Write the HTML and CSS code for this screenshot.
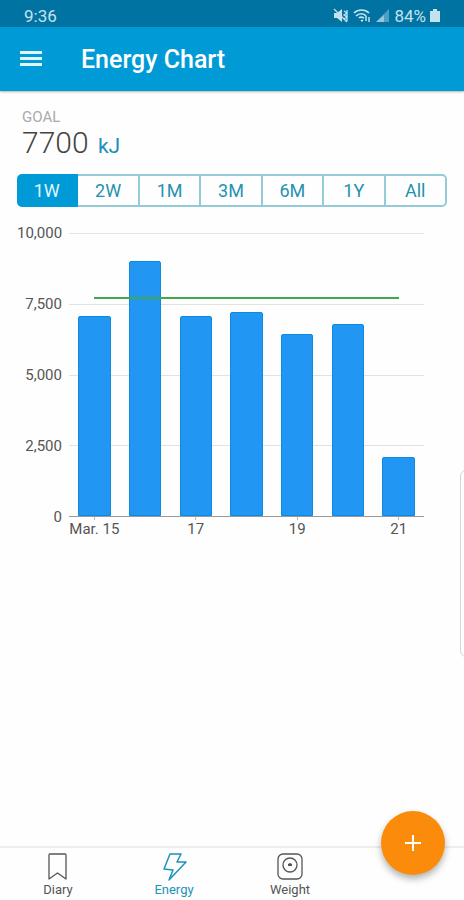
FILE: index.html
```html
<!DOCTYPE html>
<html lang="en">
<head>
    <meta charset="UTF-8">
    <meta name="viewport" content="width=device-width, initial-scale=1.0">
    <title>Energy Chart</title>
    <link rel="stylesheet" href="styles.css">
</head>
<body>
    <div class="status-bar">
        <span>9:36</span>
        <div class="status-icons">
            <svg width="16" height="16" viewBox="0 0 16 16" fill="currentColor">
                <path d="M1 5h3l5-4v13l-5-4H1z"/>
                <path d="M1 1l13 13M11 3l3 2-3 2 3 2-3 2M14 2v11" fill="none" stroke="currentColor" stroke-width="1.3"/>
            </svg>
            <svg width="19" height="16" viewBox="0 0 19 16" fill="none" stroke="currentColor" stroke-width="1.7">
                <path d="M1 5c4-4 11-4 15 0M3 8c3-3 8-3 10 0M6 10c1-1 3-1 5 0"/>
                <path d="M8 12l1 1 1-1M13 8v5M16 9v5" stroke-width="1.5"/>
            </svg>
            <svg width="14" height="16" viewBox="0 0 14 16" fill="currentColor">
                <path d="M0 14L13 1v13z" opacity=".4"/>
                <path d="M0 14l8-7v7z" opacity=".6"/>
            </svg>
            <span>84%</span>
            <svg width="10" height="16" viewBox="0 0 10 16" fill="currentColor">
                <path d="M3 1h4v2h3v11H0V3h3z"/>
            </svg>
        </div>
    </div>

    <header>
        <button class="menu-btn" aria-label="Menu">
            <svg width="22" height="16" viewBox="0 0 22 16" fill="currentColor">
                <path d="M0 0h22v3H0zM0 6h22v3H0zM0 12h22v3H0z"/>
            </svg>
        </button>
        <h1>Energy Chart</h1>
    </header>

    <main>
        <div class="goal">
            <div class="goal-label">GOAL</div>
            <div class="goal-value">7700 <span class="goal-unit">kJ</span></div>
        </div>

        <div class="range">
            <button class="active">1W</button>
            <button>2W</button>
            <button>1M</button>
            <button>3M</button>
            <button>6M</button>
            <button>1Y</button>
            <button>All</button>
        </div>

        <div class="chart">
            <div class="y-axis">
                <span>10,000</span>
                <span>7,500</span>
                <span>5,000</span>
                <span>2,500</span>
                <span>0</span>
            </div>
            <div class="plot">
                <div class="grid-lines"><i></i><i></i><i></i><i></i></div>
                <div class="bars">
                    <div class="bar" style="height: 70.8%"></div>
                    <div class="bar" style="height: 90.2%"></div>
                    <div class="bar" style="height: 70.8%"></div>
                    <div class="bar" style="height: 72%"></div>
                    <div class="bar" style="height: 64.2%"></div>
                    <div class="bar" style="height: 68%"></div>
                    <div class="bar" style="height: 21%"></div>
                </div>
                <div class="goal-line" style="bottom: 76.6%"></div>
            </div>
            <div class="x-axis">
                <span>Mar. 15</span>
                <span></span>
                <span>17</span>
                <span></span>
                <span>19</span>
                <span></span>
                <span>21</span>
            </div>
        </div>
    </main>

    <div class="edge-panel"></div>

    <nav>
        <a href="#diary">
            <svg width="28" height="28" viewBox="0 0 28 28" fill="none" stroke="currentColor" stroke-width="1.3" stroke-linejoin="round">
                <path d="M6 1h15q1 0 1 1v24l-8.5-6L5 26V2q0-1 1-1z"/>
            </svg>
            Diary
        </a>
        <a href="#energy" class="active">
            <svg width="28" height="28" viewBox="0 0 28 28" fill="none" stroke="currentColor" stroke-width="1.5" stroke-linejoin="round">
                <path d="M10 1h11l-4 8h9L9 27l4-10-9-1z"/>
            </svg>
            Energy
        </a>
        <a href="#weight">
            <svg width="28" height="28" viewBox="0 0 28 28" fill="none" stroke="currentColor" stroke-width="1.3">
                <rect x="2" y="1" width="24" height="25" rx="5"/>
                <circle cx="14" cy="12" r="7"/>
                <path d="M12 13v-2l2-1 2 1v2z" fill="currentColor" stroke="none"/>
            </svg>
            Weight
        </a>
    </nav>
    <button class="fab" aria-label="Add">
        <svg width="18" height="18" viewBox="0 0 18 18" stroke="currentColor" stroke-width="2">
            <path d="M9 1v16M1 9h16"/>
        </svg>
    </button>
</body>
</html>
```
FILE: styles.css
```css
* {
    box-sizing: border-box;
}
body {
    font-family: Roboto, sans-serif;
    background-color: #fefefe;
    color: #555;
    margin: 0;
    min-height: 100vh;
    display: flex;
    flex-direction: column;
    position: relative;
    overflow-x: hidden;
}
button {
    font-family: inherit;
    border: none;
    background: none;
    padding: 0;
    cursor: pointer;
}
svg {
    display: block;
}
.status-bar {
    display: flex;
    justify-content: space-between;
    align-items: center;
    height: 27px;
    padding: 4px 24px 0;
    background-color: #0073a2;
    color: #c3e2ee;
    font-size: 17px;
}
.status-icons {
    display: flex;
    align-items: center;
    gap: 4px;
}
header {
    display: flex;
    align-items: center;
    gap: 39px;
    height: 64px;
    padding: 0 20px;
    background-color: #009bd7;
    color: white;
    box-shadow: 0 1px 2px rgba(0, 0, 0, 0.3);
}
header h1 {
    margin: 0;
    font-size: 25px;
    font-weight: 500;
}
.menu-btn {
    color: #dff6fd;
}
main {
    flex: 1;
    padding: 16px 17px 0;
}
.goal {
    padding-left: 5px;
}
.goal-label {
    font-size: 15px;
    line-height: 20px;
    color: #aaa;
}
.goal-value {
    font-size: 30px;
    font-weight: 300;
    line-height: 32px;
    color: #444;
}
.goal-unit {
    margin-left: 2px;
    font-size: 21px;
    font-weight: 400;
    color: #1a8fb8;
}
.range {
    display: flex;
    height: 33px;
    margin-top: 12px;
}
.range button {
    flex: 1;
    border: solid #93ccd6;
    border-width: 2px 2px 2px 0;
    font-size: 18px;
    color: #2492b0;
}
.range button:last-child {
    border-radius: 0 5px 5px 0;
}
.range .active {
    border-color: #009bd7;
    border-radius: 5px 0 0 5px;
    background-color: #009bd7;
    color: #dff6fd;
}
.chart {
    display: grid;
    grid-template-columns: 45px 1fr;
    grid-template-rows: 284px auto;
    column-gap: 7px;
    margin: 26px 23px 0 0;
    font-size: 15px;
    line-height: 20px;
}
.y-axis {
    display: flex;
    flex-direction: column;
    justify-content: space-between;
    margin: -10px 0;
    text-align: right;
}
.plot {
    display: grid;
    position: relative;
    border-bottom: 1px solid #999;
}
.grid-lines,
.bars {
    grid-area: 1 / 1;
}
.grid-lines {
    display: grid;
    grid-template-rows: repeat(4, 1fr);
}
.grid-lines i {
    border-top: 1px solid #e2e2e2;
}
.bars {
    display: grid;
    grid-template-columns: repeat(7, 1fr);
    align-items: end;
    justify-items: center;
}
.bar {
    width: 64%;
    background-color: #2196f3;
    border: 1px solid #0c8be2;
    border-radius: 2px 2px 0 0;
}
.goal-line {
    position: absolute;
    left: 7%;
    right: 7%;
    height: 2px;
    background-color: #3fa848;
}
.x-axis {
    grid-column: 2;
    display: grid;
    grid-template-columns: repeat(7, 1fr);
    justify-items: center;
    white-space: nowrap;
}
.x-axis span {
    display: flex;
    flex-direction: column;
    align-items: center;
    line-height: 18px;
}
.x-axis span:nth-child(odd)::before {
    content: "";
    width: 1px;
    height: 3px;
    background-color: #bbb;
}
/* handle of the side panel, mostly off screen */
.edge-panel {
    position: absolute;
    top: 470px;
    right: -8px;
    width: 12px;
    height: 187px;
    border: 1px solid #d5d5d5;
    border-radius: 7px;
}
nav {
    display: grid;
    grid-template-columns: repeat(4, 1fr);
    height: 54px;
    padding-top: 5px;
    border-top: 2px solid #eee;
}
nav a {
    display: flex;
    flex-direction: column;
    align-items: center;
    font-size: 13px;
    line-height: 18px;
    color: #555;
    text-decoration: none;
}
nav .active {
    color: #1a93b8;
}
.fab {
    position: fixed;
    right: 19px;
    bottom: 25px;
    display: flex;
    align-items: center;
    justify-content: center;
    width: 64px;
    height: 64px;
    border-radius: 50%;
    background-color: #fb8c0b;
    color: white;
    box-shadow: 0 4px 7px rgba(0, 0, 0, 0.3);
}
```
